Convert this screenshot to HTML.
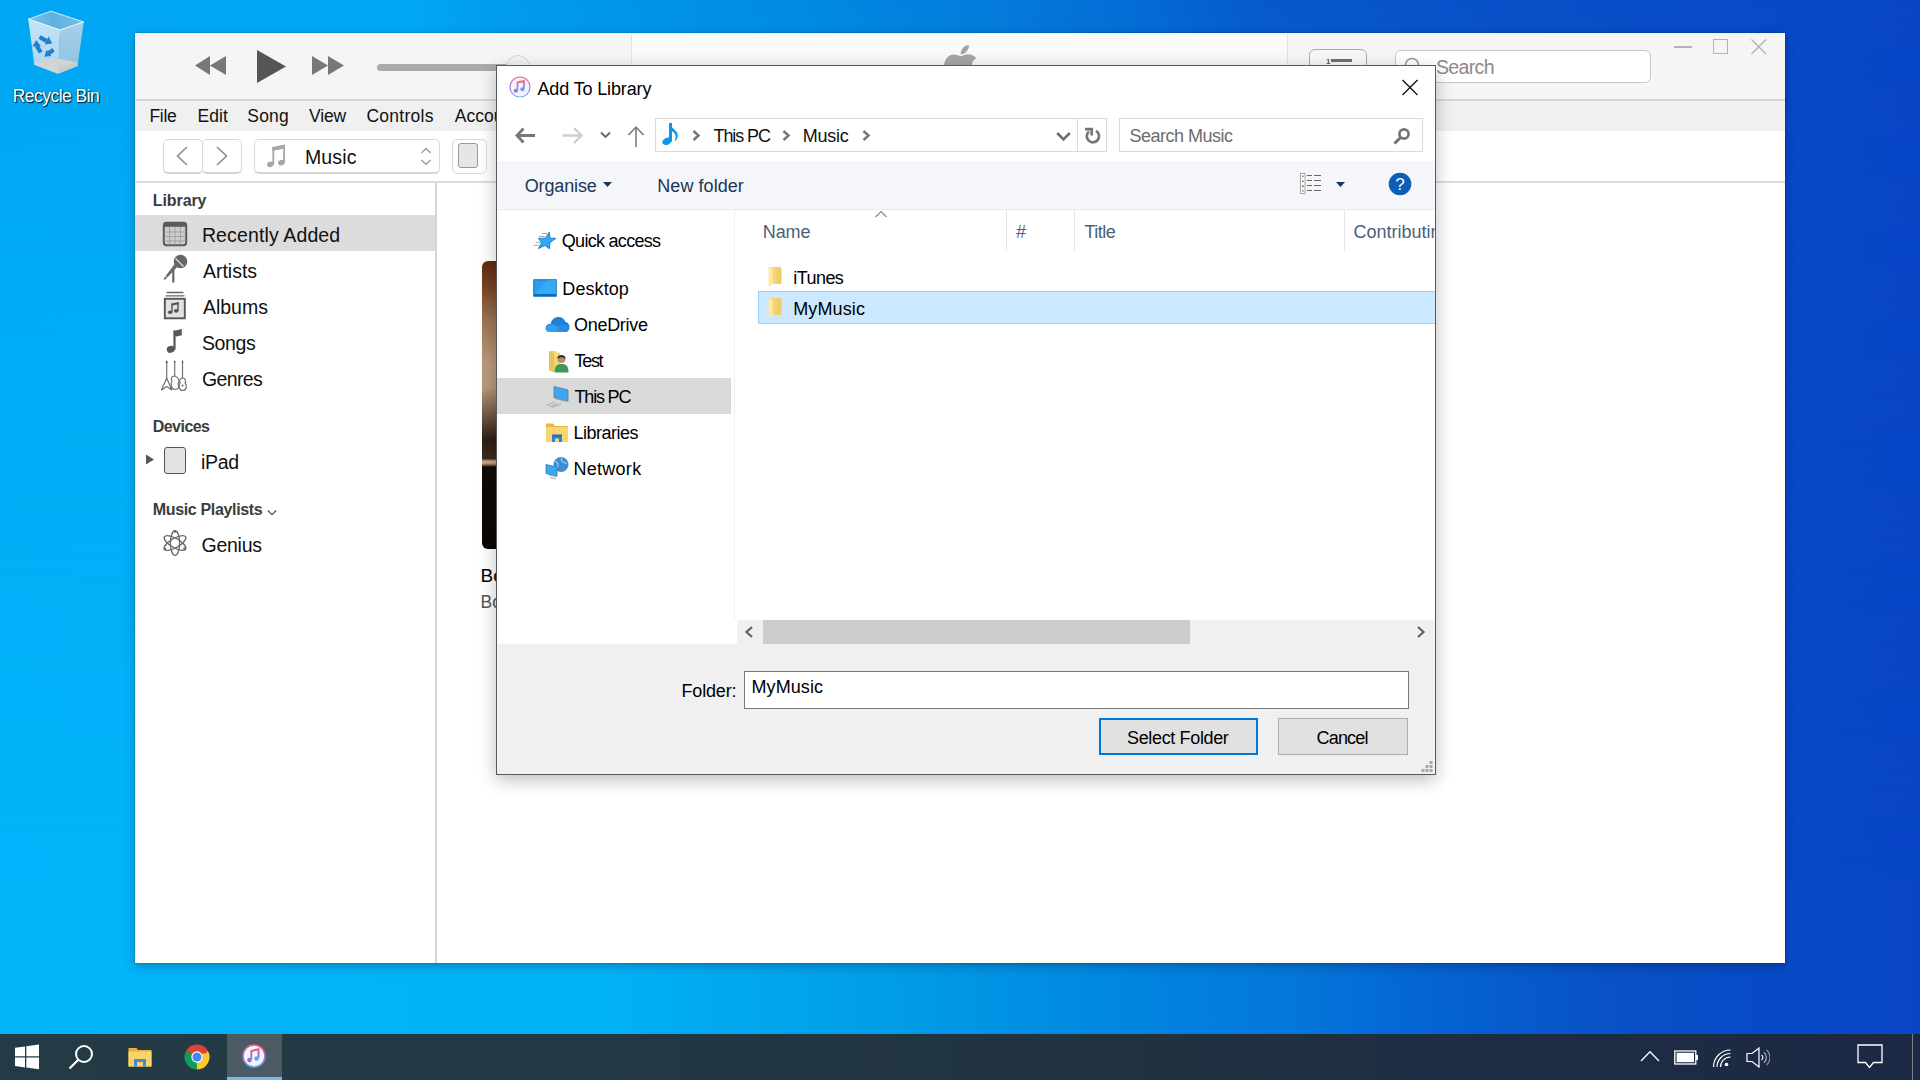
<!DOCTYPE html><html><head><meta charset='utf-8'><style>
*{margin:0;padding:0;box-sizing:border-box}
html,body{width:1920px;height:1080px;overflow:hidden}
body{position:relative;font-family:"Liberation Sans",sans-serif;
 background:linear-gradient(90deg,#02b4fa 0px,#02b2f8 600px,#00aaf2 700px,#009ce8 900px,#0088e0 1100px,#0476da 1300px,#0468d4 1400px,#065cce 1500px,#0852c8 1600px,#084cc6 1700px,#0846c6 1920px);}
#bgtop{position:absolute;left:0;top:0;width:1920px;height:1034px;
 background:linear-gradient(90deg,#00a6f2 0px,#00a8f4 400px,#009cec 500px,#008ae2 800px,#047ada 1000px,#046cd6 1130px,#065acd 1250px,#0850c8 1500px,#0846c6 1920px);
 -webkit-mask-image:linear-gradient(180deg,#000 0%,rgba(0,0,0,0.5) 35%,transparent 85%);mask-image:linear-gradient(180deg,#000 0%,rgba(0,0,0,0.5) 35%,transparent 85%);}
.a{position:absolute}
.t{position:absolute;white-space:nowrap}
</style></head><body>
<div id="bgtop"></div>
<svg class="a" style="left:15px;top:5px;" width="80" height="75" viewBox="0 0 80 75">
<defs>
 <linearGradient id="rbl" x1="0" y1="0" x2="0" y2="1"><stop offset="0" stop-color="#c4e3f4"/><stop offset="1" stop-color="#a9d6ee"/></linearGradient>
 <linearGradient id="rbr" x1="0" y1="0" x2="0" y2="1"><stop offset="0" stop-color="#a6d0e8"/><stop offset="1" stop-color="#8fc2df"/></linearGradient>
 <linearGradient id="rbi" x1="0" y1="0" x2="1" y2="0"><stop offset="0" stop-color="#7cc3ea"/><stop offset="0.45" stop-color="#5fb0df"/><stop offset="1" stop-color="#74c0ea"/></linearGradient>
</defs>
<path d="M13.2 14.2 L36.1 6.25 L68.75 17 L45.1 25 Z" fill="url(#rbi)" stroke="#dff3fc" stroke-width="0.9"/>
<path d="M13.2 14.2 L45.1 25 L43 68.75 L19.4 59.7 Z" fill="url(#rbl)"/>
<path d="M45.1 25 L68.75 17 L62.5 61.1 L43 68.75 Z" fill="url(#rbr)"/>
<path d="M19.4 58.3 L38.9 52.8 L62.5 57.6 L62.5 61.1 L43 68.75 L19.4 59.7 Z" fill="#d4d4d4" opacity="0.95"/>
<path d="M43 68.75 L62.5 61.1 L62.5 57.6 L43.5 62 Z" fill="#c6c6c6" opacity="0.7"/>
<path d="M13.2 14.2 L45.1 25 L68.75 17" fill="none" stroke="#e8f7fd" stroke-width="0.9"/>
<g stroke="#1f7dd4" stroke-width="4.2" stroke-linecap="butt" fill="none">
 <path d="M24.5 32 L31.5 35.8"/>
 <path d="M25.8 47.5 L21.8 41"/>
 <path d="M38.5 44.8 L33.5 48.3"/>
</g>
<g fill="#1f7dd4">
 <path d="M33.6 31.6 L37.2 38.6 L29.6 39.4 Z"/>
 <path d="M17.4 41.5 L21.2 35.2 L26 41.2 Z"/>
 <path d="M36.3 51 L29.3 51.8 L31.5 44.9 Z"/>
</g>
</svg>
<div class="t " style="left:12.75px;top:88.49px;font-size:17.5px;line-height:17.5px;color:#fff;letter-spacing:-0.53px;text-shadow:1px 1px 1px rgba(0,0,0,0.85),0 0 2px rgba(0,0,0,0.45);">Recycle Bin</div>
<div class="a" style="left:135px;top:33px;width:1650px;height:930px;background:#fff;box-shadow:0 0 1.5px rgba(0,0,0,0.35),0 3px 10px rgba(0,0,0,0.25);"></div>
<div class="a" style="left:135px;top:33px;width:1650px;height:67px;background:#f5f5f5;"></div>
<div class="a" style="left:135px;top:99px;width:1650px;height:2px;background:#d6d6d6;"></div>
<div class="a" style="left:631px;top:33px;width:657px;height:66px;background:linear-gradient(180deg,#fbfbfb 0%,#f8f8f8 60%,#ececec 100%);border-left:1px solid #e2e2e2;border-right:1px solid #e2e2e2;"></div>
<svg class="a" style="left:930px;top:40px;" width="60" height="30" viewBox="0 0 60 30"><g transform="translate(10 4) scale(0.243)" fill="#a5a5a5"><path d="M150.37 130.25c-2.45 5.66-5.35 10.87-8.71 15.66-4.58 6.53-8.33 11.05-11.22 13.56-4.48 4.12-9.28 6.23-14.42 6.35-3.69 0-8.14-1.05-13.32-3.18-5.197-2.12-9.973-3.17-14.34-3.17-4.58 0-9.492 1.05-14.746 3.17-5.262 2.130-9.501 3.240-12.742 3.350-4.929 0.210-9.842-1.960-14.746-6.520-3.130-2.730-7.045-7.410-11.735-14.040-5.032-7.080-9.169-15.290-12.410-24.650-3.471-10.110-5.211-19.900-5.211-29.378 0-10.857 2.346-20.221 7.045-28.068 3.693-6.303 8.606-11.275 14.755-14.925s12.793-5.510 19.948-5.629c3.915 0 9.049 1.211 15.429 3.591 6.362 2.388 10.447 3.599 12.238 3.599 1.339 0 5.877-1.416 13.570-4.239 7.275-2.618 13.415-3.702 18.445-3.275 13.630 1.100 23.870 6.473 30.680 16.153-12.190 7.386-18.220 17.731-18.100 31.002 0.110 10.337 3.860 18.939 11.230 25.769 3.340 3.170 7.070 5.620 11.220 7.360-0.900 2.610-1.850 5.110-2.860 7.510z"/><path d="M119.11 7.24c0 8.102-2.960 15.667-8.860 22.669-7.120 8.324-15.732 13.134-25.071 12.375-0.119-0.972-0.188-1.995-0.188-3.070 0-7.778 3.386-16.102 9.399-22.908 3.002-3.446 6.820-6.311 11.450-8.597 4.620-2.252 8.990-3.497 13.100-3.710 0.120 1.083 0.170 2.166 0.170 3.240z"/></g></svg>
<svg class="a" style="left:193px;top:55px;" width="36" height="23" viewBox="0 0 36 23"><path d="M2 10.5 L17 1 L17 20 Z M17 10.5 L33 1 L33 20 Z" fill="#777"/></svg>
<svg class="a" style="left:255px;top:49px;" width="34" height="36" viewBox="0 0 34 36"><path d="M2 1 L31 17.5 L2 34 Z" fill="#555"/></svg>
<svg class="a" style="left:310px;top:55px;" width="36" height="23" viewBox="0 0 36 23"><path d="M2 1 L18 10.5 L2 20 Z M18 1 L34 10.5 L18 20 Z" fill="#777"/></svg>
<div class="a" style="left:377px;top:64px;width:140px;height:7px;background:#aaa;border-radius:4px;"></div>
<div class="a" style="left:506px;top:55px;width:24px;height:24px;background:#f2f2f2;border:1px solid #d5d5d5;border-radius:50%;"></div>
<div class="a" style="left:1309px;top:49px;width:58px;height:34px;border:1.5px solid #a9a9a9;border-radius:6px;background:#f7f7f7;"></div>
<div class="a" style="left:1331px;top:59px;width:21px;height:3px;background:#707070;"></div>
<div class="t " style="left:1326.00px;top:57.53px;font-size:8px;line-height:8px;color:#555;font-weight:700;">1</div>
<div class="a" style="left:1395px;top:50px;width:256px;height:33px;border:1.5px solid #c6c6c6;border-radius:6px;background:#fff;"></div>
<svg class="a" style="left:1402px;top:55px;" width="22" height="22" viewBox="0 0 22 22"><circle cx="10" cy="10" r="6.5" fill="none" stroke="#9a9a9a" stroke-width="1.6"/><path d="M14.5 14.5 L20 20" stroke="#9a9a9a" stroke-width="1.8"/></svg>
<div class="t " style="left:1435.90px;top:58.04px;font-size:19.5px;line-height:19.5px;color:#8a8a8a;letter-spacing:-0.63px;">Search</div>
<div class="a" style="left:1674px;top:46px;width:18px;height:1.5px;background:#b3b3b3;"></div>
<div class="a" style="left:1713px;top:39px;width:15px;height:15px;border:1.3px solid #b3b3b3;"></div>
<svg class="a" style="left:1750px;top:38px;" width="18" height="18" viewBox="0 0 18 18"><path d="M1.5 1.5 L16 16 M16 1.5 L1.5 16" stroke="#b3b3b3" stroke-width="1.4"/></svg>
<div class="a" style="left:135px;top:101px;width:1650px;height:30px;background:#f0f0f0;"></div>
<div class="t " style="left:149.50px;top:107.99px;font-size:17.5px;line-height:17.5px;color:#111;letter-spacing:-0.33px;">File</div>
<div class="t " style="left:197.40px;top:107.99px;font-size:17.5px;line-height:17.5px;color:#111;letter-spacing:0.07px;">Edit</div>
<div class="t " style="left:247.30px;top:107.99px;font-size:17.5px;line-height:17.5px;color:#111;letter-spacing:0.20px;">Song</div>
<div class="t " style="left:309.00px;top:107.99px;font-size:17.5px;line-height:17.5px;color:#111;letter-spacing:-0.13px;">View</div>
<div class="t " style="left:366.40px;top:107.99px;font-size:17.5px;line-height:17.5px;color:#111;letter-spacing:0.27px;">Controls</div>
<div class="t " style="left:454.80px;top:107.99px;font-size:17.5px;line-height:17.5px;color:#111;">Account</div>
<div class="a" style="left:135px;top:181px;width:1650px;height:1.5px;background:#dcdcdc;"></div>
<div class="a" style="left:163px;top:139px;width:40px;height:35px;border:1px solid #d9d9d9;border-bottom:2px solid #d2d2d2;border-radius:5px;background:#fff;"></div>
<div class="a" style="left:202px;top:139px;width:40px;height:35px;border:1px solid #d9d9d9;border-bottom:2px solid #d2d2d2;border-radius:5px;background:#fff;"></div>
<svg class="a" style="left:175px;top:146px;" width="14" height="20" viewBox="0 0 14 20"><path d="M11.5 1.5 L2.5 10 L11.5 18.5" fill="none" stroke="#8e8e8e" stroke-width="1.7" stroke-linecap="round"/></svg>
<svg class="a" style="left:215px;top:146px;" width="14" height="20" viewBox="0 0 14 20"><path d="M2.5 1.5 L11.5 10 L2.5 18.5" fill="none" stroke="#8e8e8e" stroke-width="1.7" stroke-linecap="round"/></svg>
<div class="a" style="left:254px;top:139px;width:186px;height:35px;border:1px solid #d9d9d9;border-bottom:2px solid #d2d2d2;border-radius:5px;background:#fff;"></div>
<svg class="a" style="left:265px;top:142px;" width="24" height="26" viewBox="0 0 24 26"><path d="M7.4 5 L20 2.6 L20 6.4 L7.4 8.8 Z" fill="#a6a6a6"/><rect x="7.4" y="5" width="1.8" height="17.5" fill="#a6a6a6"/><rect x="18.2" y="3" width="1.8" height="17.5" fill="#a6a6a6"/><ellipse cx="5.4" cy="22.4" rx="3.4" ry="2.7" transform="rotate(-20 5.4 22.4)" fill="#a6a6a6"/><ellipse cx="16.4" cy="20.6" rx="3.4" ry="2.7" transform="rotate(-20 16.4 20.6)" fill="#a6a6a6"/></svg>
<div class="t " style="left:305.00px;top:148.29px;font-size:19.5px;line-height:19.5px;color:#111;letter-spacing:0.12px;">Music</div>
<svg class="a" style="left:419px;top:146px;" width="14" height="22" viewBox="0 0 14 22"><path d="M2.5 7 L7 2.5 L11.5 7 M2.5 14 L7 18.5 L11.5 14" fill="none" stroke="#a0a0a0" stroke-width="1.5"/></svg>
<div class="a" style="left:452px;top:139px;width:35px;height:35px;border:1px solid #dadada;border-radius:5px;background:#fff;"></div>
<div class="a" style="left:458px;top:143px;width:20px;height:25px;border:1.3px solid #9a9a9a;border-radius:3px;background:#e6e6e6;"></div>
<div class="a" style="left:135px;top:33px;width:1650px;height:1px;background:#dcfbff;"></div>
<div class="a" style="left:135px;top:33px;width:1px;height:930px;background:#dcfbff;"></div>
<div class="a" style="left:435px;top:182px;width:2px;height:781px;background:#d6d6d6;"></div>
<div class="t " style="left:152.75px;top:192.76px;font-size:16px;line-height:16px;color:#3c3c3c;font-weight:700;letter-spacing:-0.08px;">Library</div>
<div class="a" style="left:135px;top:215px;width:300px;height:36px;background:#dcdcdc;"></div>
<div class="t " style="left:201.90px;top:226.29px;font-size:19.5px;line-height:19.5px;color:#111;letter-spacing:0.13px;">Recently Added</div>
<div class="t " style="left:202.90px;top:262.29px;font-size:19.5px;line-height:19.5px;color:#111;">Artists</div>
<div class="t " style="left:202.90px;top:298.04px;font-size:19.5px;line-height:19.5px;color:#111;">Albums</div>
<div class="t " style="left:201.90px;top:333.79px;font-size:19.5px;line-height:19.5px;color:#111;letter-spacing:-0.38px;">Songs</div>
<div class="t " style="left:201.90px;top:369.79px;font-size:19.5px;line-height:19.5px;color:#111;letter-spacing:-0.60px;">Genres</div>
<div class="t " style="left:152.75px;top:419.26px;font-size:16px;line-height:16px;color:#3c3c3c;font-weight:700;letter-spacing:-0.54px;">Devices</div>
<div class="t " style="left:201.00px;top:453.04px;font-size:19.5px;line-height:19.5px;color:#111;letter-spacing:-0.33px;">iPad</div>
<div class="t " style="left:152.75px;top:502.26px;font-size:16px;line-height:16px;color:#3c3c3c;font-weight:700;letter-spacing:-0.34px;">Music Playlists</div>
<svg class="a" style="left:266px;top:508px;" width="12" height="9" viewBox="0 0 12 9"><path d="M1.8 2.5 L6 6.7 L10.2 2.5" fill="none" stroke="#555" stroke-width="1.3"/></svg>
<div class="t " style="left:201.50px;top:535.54px;font-size:19.5px;line-height:19.5px;color:#111;letter-spacing:-0.25px;">Genius</div>
<svg class="a" style="left:162px;top:221px;" width="26" height="26" viewBox="0 0 26 26"><rect x="1.8" y="1.8" width="22.4" height="22.4" rx="2.6" fill="#cdcdcd" stroke="#5a5a5a" stroke-width="2"/><rect x="1.8" y="1.8" width="22.4" height="4" fill="#5a5a5a"/><path d="M2.5 11H23.5 M2.5 15.5H23.5 M2.5 20H23.5 M7.6 6V23.5 M13 6V23.5 M18.4 6V23.5" stroke="#a2a2a2" stroke-width="1"/></svg>
<svg class="a" style="left:160px;top:253px;" width="30" height="32" viewBox="0 0 30 32"><path d="M16.5 8.5 L4.5 24.5 L3.5 27 L6 26 L19.5 11.5 Z" fill="#6a6a6a"/><path d="M5 22.5 L7.5 25" stroke="#fff" stroke-width="0.8"/><circle cx="20.5" cy="8.5" r="6.8" fill="#666"/><path d="M15.5 5.5 L23.5 13.5" stroke="#e8e8e8" stroke-width="1.1"/><rect x="12.2" y="17" width="2.2" height="12.5" fill="#666"/></svg>
<svg class="a" style="left:162px;top:290px;" width="26" height="30" viewBox="0 0 26 30"><path d="M4.5 2.5H21.5 M3.5 5.8H22.5" stroke="#666" stroke-width="1.3"/><rect x="2.8" y="8.8" width="20" height="19.5" fill="#e2e2e2" stroke="#555" stroke-width="1.9"/><path d="M9.5 13.5 L16.5 12 L16.5 14.2 L9.5 15.7 Z" fill="#555"/><rect x="9.3" y="13.5" width="1.4" height="8.5" fill="#555"/><rect x="15.3" y="12.2" width="1.4" height="8.5" fill="#555"/><ellipse cx="8.2" cy="22.2" rx="2.3" ry="1.8" fill="#555"/><ellipse cx="14.2" cy="20.9" rx="2.3" ry="1.8" fill="#555"/></svg>
<svg class="a" style="left:164px;top:327px;" width="22" height="28" viewBox="0 0 22 28"><path d="M9.5 4 L17.8 2 L17.8 8.2 L11.5 9.8 Z" fill="#585858"/><rect x="9.4" y="3.5" width="2.2" height="19" fill="#585858"/><ellipse cx="6.8" cy="22.3" rx="4.1" ry="3.4" transform="rotate(-20 6.8 22.3)" fill="#585858"/></svg>
<svg class="a" style="left:158px;top:358px;" width="32" height="35" viewBox="0 0 32 35"><g fill="none" stroke="#6e6e6e" stroke-width="1.15" stroke-linejoin="round"><path d="M8.7 3 V20"/><path d="M8.7 20 L3.5 32 L8.7 28.5 L13.8 32 Z"/><path d="M16.7 3 V18"/><path d="M16.7 18 C13.5 18 12.5 20.5 14 23 C12 25.5 13 31.5 17 31.5 C20.5 31.5 21.5 28.5 20 26 C22 24 21 19 16.7 18 Z"/><path d="M24.5 3 V20"/><path d="M24.5 20 C21.5 20 21 23.5 22.3 25 C20.5 26.5 20.5 32.5 24.7 32.5 C29 32.5 29 26.5 27 25 C28.3 23.5 27.5 20 24.5 20 Z"/></g><circle cx="24.6" cy="27.5" r="1.1" fill="#6e6e6e"/><path d="M7.3 5 L8.7 2 L10.1 5 Z M15.5 4.5 L16.7 2 L17.9 4.5 Z M23.3 4.5 L24.5 2 L25.7 4.5 Z" fill="#6e6e6e"/></svg>
<svg class="a" style="left:145px;top:454px;" width="10" height="11" viewBox="0 0 10 11"><path d="M1 0.5 L9 5.5 L1 10.5 Z" fill="#555"/></svg>
<div class="a" style="left:164px;top:447px;width:22px;height:27px;border:1.6px solid #555;border-radius:3px;background:#e3e3e3;"></div>
<svg class="a" style="left:161px;top:529px;" width="28" height="28" viewBox="0 0 28 28"><g fill="none" stroke="#6a6a6a" stroke-width="1.35"><ellipse cx="14" cy="14" rx="4.6" ry="12.3"/><ellipse cx="14" cy="14" rx="4.6" ry="12.3" transform="rotate(60 14 14)"/><ellipse cx="14" cy="14" rx="4.6" ry="12.3" transform="rotate(-60 14 14)"/></g><circle cx="14" cy="2.5" r="1.3" fill="#6a6a6a"/><circle cx="4" cy="20" r="1.3" fill="#6a6a6a"/><circle cx="23.5" cy="19.5" r="1.3" fill="#6a6a6a"/></svg>
<div class="a" style="left:482px;top:261px;width:40px;height:288px;border-radius:6px;background:linear-gradient(180deg,#5e2a10 0%,#7a4424 9%,#9a7252 20%,#bb9c7c 36%,#b89878 44%,#6e5444 54%,#2e1e16 62%,#3a2a20 68.6%,#d2a888 69.6%,#c09070 70.4%,#120a08 71.5%,#0c0605 100%);"></div>
<div class="t " style="left:480.50px;top:566.22px;font-size:19px;line-height:19px;color:#000;">Bo</div>
<div class="t " style="left:480.50px;top:594.49px;font-size:17.5px;line-height:17.5px;color:#555;">Bo</div>
<div class="a" style="left:496px;top:65px;width:940px;height:710px;background:#fff;border:1px solid #5a5a5a;box-shadow:0 5px 16px rgba(0,0,0,0.26);"></div>
<svg class="a" style="left:509px;top:76px;" width="22" height="22" viewBox="0 0 22 22"><defs><linearGradient id="itg" x1="0" y1="0" x2="0" y2="1"><stop offset="0" stop-color="#f06a8a"/><stop offset="0.5" stop-color="#b27ae0"/><stop offset="1" stop-color="#6cb4f0"/></linearGradient></defs>
<circle cx="11" cy="11" r="10" fill="#f4f4f8" stroke="url(#itg)" stroke-width="1.2"/>
<path d="M8.5 14.5 V6.5 L15 5 V13" fill="none" stroke="url(#itg)" stroke-width="1.8"/>
<circle cx="6.8" cy="14.8" r="2" fill="#a070e0"/><circle cx="13.3" cy="13.3" r="2" fill="#60a8f0"/></svg>
<div class="t " style="left:537.50px;top:79.56px;font-size:18px;line-height:18px;color:#000;letter-spacing:-0.14px;">Add To Library</div>
<svg class="a" style="left:1401px;top:79px;" width="18" height="17" viewBox="0 0 18 17"><path d="M1.5 1 L16.5 16 M16.5 1 L1.5 16" stroke="#111" stroke-width="1.3"/></svg>
<svg class="a" style="left:514px;top:126px;" width="24" height="19" viewBox="0 0 24 19"><path d="M9.5 2.5 L3 9.5 L9.5 16.5 M3 9.5 H21" fill="none" stroke="#777" stroke-width="2.8"/></svg>
<svg class="a" style="left:560px;top:126px;" width="24" height="19" viewBox="0 0 24 19"><path d="M14 2 L21.5 9.5 L14 17 M21.5 9.5 H2.5" fill="none" stroke="#cfcfcf" stroke-width="2.4"/></svg>
<svg class="a" style="left:599px;top:130px;" width="13" height="10" viewBox="0 0 13 10"><path d="M2 2.5 L6.5 7 L11 2.5" fill="none" stroke="#666" stroke-width="1.8"/></svg>
<svg class="a" style="left:626px;top:125px;" width="20" height="23" viewBox="0 0 20 23"><path d="M2.5 10 L10 2 L17.5 10 M10 2 V22" fill="none" stroke="#777" stroke-width="1.5"/></svg>
<div class="a" style="left:655px;top:118px;width:452px;height:34px;border:1px solid #d9d9d9;background:#fff;"></div>
<div class="a" style="left:1077px;top:118px;width:1px;height:34px;background:#dadada;"></div>
<svg class="a" style="left:656px;top:119px;" width="26" height="30" viewBox="0 0 26 30"><rect x="13" y="4" width="3" height="18.5" fill="#0b98ea"/><ellipse cx="11" cy="22.3" rx="4.9" ry="3.5" transform="rotate(-25 11 22.3)" fill="#0b98ea"/><path d="M13.5 4.2 C15 9.5 21.8 11 21.8 16.5 C21.8 18.5 20.6 20.6 19.6 21.8 L18.6 21.3 C19.6 19.6 19.9 17.8 19.5 16.2 C18.8 13.6 16.2 12.3 15.2 11.8 Z" fill="#0b98ea"/></svg>
<svg class="a" style="left:691px;top:129px;" width="11" height="13" viewBox="0 0 11 13"><path d="M2.5 2 L7.5 6.5 L2.5 11" fill="none" stroke="#777" stroke-width="2.5"/></svg>
<div class="t " style="left:713.50px;top:126.81px;font-size:18px;line-height:18px;color:#111;letter-spacing:-1.08px;">This PC</div>
<svg class="a" style="left:781px;top:129px;" width="11" height="13" viewBox="0 0 11 13"><path d="M2.5 2 L7.5 6.5 L2.5 11" fill="none" stroke="#777" stroke-width="2.5"/></svg>
<div class="t " style="left:802.75px;top:126.81px;font-size:18px;line-height:18px;color:#111;letter-spacing:-0.25px;">Music</div>
<svg class="a" style="left:861px;top:129px;" width="11" height="13" viewBox="0 0 11 13"><path d="M2.5 2 L7.5 6.5 L2.5 11" fill="none" stroke="#777" stroke-width="2.5"/></svg>
<svg class="a" style="left:1055px;top:130px;" width="17" height="13" viewBox="0 0 17 13"><path d="M2.2 3 L8.5 9.3 L14.8 3" fill="none" stroke="#707070" stroke-width="2.6"/></svg>
<svg class="a" style="left:1083px;top:126px;" width="20" height="20" viewBox="0 0 20 20"><path d="M12.95 4.92 A6.1 6.1 0 1 1 5.98 5.53" fill="none" stroke="#757575" stroke-width="2.7"/><path d="M2 1.8 H10 V9.5 H7.4 V4.4 H2 Z" fill="#757575"/></svg>
<div class="a" style="left:1119px;top:118px;width:304px;height:34px;border:1px solid #d9d9d9;background:#fff;"></div>
<div class="t " style="left:1129.50px;top:127.06px;font-size:18px;line-height:18px;color:#6d6d6d;letter-spacing:-0.50px;">Search Music</div>
<svg class="a" style="left:1391px;top:126px;" width="21" height="20" viewBox="0 0 21 20"><circle cx="13" cy="8" r="4.6" fill="none" stroke="#737373" stroke-width="2.7"/><path d="M9.5 11.5 L3.5 17.5" stroke="#737373" stroke-width="3"/></svg>
<div class="a" style="left:497px;top:161px;width:938px;height:49px;background:#f4f6f9;border-bottom:1px solid #e6e8eb;"></div>
<div class="t " style="left:524.75px;top:177.46px;font-size:18px;line-height:18px;color:#1e3557;letter-spacing:-0.14px;">Organise</div>
<svg class="a" style="left:602px;top:181px;" width="11" height="7" viewBox="0 0 11 7"><path d="M1 1 L10 1 L5.5 6 Z" fill="#1e3557"/></svg>
<div class="t " style="left:657.25px;top:177.46px;font-size:18px;line-height:18px;color:#1e3557;letter-spacing:0.06px;">New folder</div>
<svg class="a" style="left:1299px;top:172px;" width="24" height="23" viewBox="0 0 24 23"><rect x="1.5" y="1.5" width="4.5" height="20" fill="#fff" stroke="#9a9a9a" stroke-width="0.9"/><g fill="#6a7a8a"><rect x="3" y="3.5" width="1.6" height="1.6"/><rect x="3" y="8.5" width="1.6" height="1.6" fill="#7a7a50"/><rect x="3" y="13.5" width="1.6" height="1.6" fill="#a03030"/><rect x="3" y="18" width="1.6" height="1.6" fill="#60a060"/></g><g stroke="#666" stroke-width="1.2"><path d="M8 3.5H13 M15 3.5H22 M8 8.5H13 M15 8.5H22 M8 13.5H13 M15 13.5H22 M8 18.5H13 M15 18.5H22"/></g></svg>
<svg class="a" style="left:1335px;top:181px;" width="11" height="7" viewBox="0 0 11 7"><path d="M1 1 L10 1 L5.5 6 Z" fill="#1e3557"/></svg>
<svg class="a" style="left:1388px;top:172px;" width="24" height="24" viewBox="0 0 24 24"><circle cx="12" cy="12" r="11.3" fill="#0b5db5"/><text x="12" y="18" font-family="Liberation Sans" font-size="17" fill="#fff" text-anchor="middle">?</text></svg>
<div class="a" style="left:734px;top:210px;width:1px;height:410px;background:#f0f0f0;"></div>
<div class="a" style="left:497px;top:378px;width:234px;height:36px;background:#d9d9d9;"></div>
<div class="t " style="left:561.80px;top:232.26px;font-size:18px;line-height:18px;color:#000;letter-spacing:-0.71px;">Quick access</div>
<div class="t " style="left:562.30px;top:280.26px;font-size:18px;line-height:18px;color:#000;letter-spacing:0.08px;">Desktop</div>
<div class="t " style="left:574.00px;top:316.16px;font-size:18px;line-height:18px;color:#000;letter-spacing:-0.29px;">OneDrive</div>
<div class="t " style="left:574.50px;top:352.26px;font-size:18px;line-height:18px;color:#000;letter-spacing:-1.30px;">Test</div>
<div class="t " style="left:574.50px;top:388.36px;font-size:18px;line-height:18px;color:#000;letter-spacing:-1.18px;">This PC</div>
<div class="t " style="left:573.50px;top:424.46px;font-size:18px;line-height:18px;color:#000;letter-spacing:-0.51px;">Libraries</div>
<div class="t " style="left:573.50px;top:460.26px;font-size:18px;line-height:18px;color:#000;letter-spacing:0.27px;">Network</div>
<svg class="a" style="left:530px;top:226px;" width="30" height="28" viewBox="0 0 30 28"><path d="M11.9 7.5H16.9 M8.8 10.5H14.8 M5.7 16.3H11.1 M3.4 19.3H8.8" stroke="#8aa2b4" stroke-width="0.9"/><path d="M19.2 6.2 L20 12.2 L25.9 12.4 L20 16.6 L19.4 22.8 L15 19.4 L8.3 22.6 L11.7 16.6 L8.3 12.4 L15.3 12.2 Z" fill="#2ea9f3" stroke="#1b77c2" stroke-width="0.9" stroke-linejoin="round"/></svg>
<svg class="a" style="left:533px;top:279px;" width="24" height="18" viewBox="0 0 24 18"><rect x="0.8" y="0.8" width="22.4" height="16.4" fill="#2aa0f2" stroke="#1579c8" stroke-width="1.2"/><path d="M1 16 L15 1 H23 V17 H1 Z" fill="#45b0f7" opacity="0.6"/><rect x="1" y="15" width="22" height="2" fill="#1268b8"/></svg>
<svg class="a" style="left:544px;top:315px;" width="26" height="18" viewBox="0 0 26 18"><path d="M6 17 C1.5 17 0.5 13 2.5 10.5 C3.5 9 5.5 8.8 6.5 9 C7.5 4.5 11 2 14.5 2 C18 2 20.5 4 21.5 7 C24 7.2 25.5 9.5 25.5 12 C25.5 15 23.5 17 21 17 Z" fill="#1f7fd6"/><path d="M6 17 C2 17 1 13.5 3 11 C6 8.5 10 9.5 13 11.5 L21 17 Z" fill="#3a9ff0"/><path d="M13 11.5 C16 9.5 22 8 25 11.5 C25.5 15 23.5 17 21 17 L13 17 Z" fill="#2a8fe8" opacity="0.8"/></svg>
<svg class="a" style="left:548px;top:349px;" width="22" height="25" viewBox="0 0 22 25"><path d="M1 2 H8 L9 3.5 H12 V21 L4 23 L1 21 Z" fill="#f5d77a"/><path d="M1 2 L6 4 L6 23 L1 21 Z" fill="#e8c25a"/><circle cx="13.5" cy="10" r="4" fill="#c08a68"/><path d="M9.5 8.5 C10 5 16 5 17.5 8.5 L17 10 C15 7.5 12 7.5 10 10 Z" fill="#333"/><path d="M6.5 23.5 C6.5 17 8.5 15 13.5 15 C18.5 15 20.5 17 20.5 23.5 Z" fill="#3c9a5f"/></svg>
<svg class="a" style="left:545px;top:385px;" width="25" height="23" viewBox="0 0 25 23"><path d="M9 1.5 L23 5 L23 16 L9 12.5 Z" fill="#3aa8f0" stroke="#5a7a90" stroke-width="0.8"/><path d="M10 12.8 L22 15.8 L22 17 L10 14 Z" fill="#7aa0b8"/><path d="M1 20.5 L10 17 M4 22 L13 18.5 M7 22.5 L16 19" stroke="#9aa8b4" stroke-width="0.9"/></svg>
<svg class="a" style="left:545px;top:422px;" width="24" height="21" viewBox="0 0 24 21"><path d="M1 1.5 H8 L10 4 H23 V20 H1 Z" fill="#e9b839"/><rect x="1" y="5" width="22" height="15" fill="#f8d56f"/><path d="M7 20 V13.5 H17 V20 H14 V16.5 H10 V20 Z" fill="#2a83d2"/><rect x="7" y="12.5" width="10" height="2" fill="#1e6fc0"/></svg>
<svg class="a" style="left:545px;top:456px;" width="25" height="24" viewBox="0 0 25 24"><circle cx="16" cy="8.5" r="7.5" fill="#3d8fcc"/><path d="M10 5 C13 6 14 9 12 12 M17 1.5 C15 5 19 8 22 7" stroke="#9fd0f2" stroke-width="1.1" fill="none"/><path d="M1 8.5 L12 11 L12 20 L1 17.5 Z" fill="#3ea8ee" stroke="#2a7ab8" stroke-width="0.8"/><path d="M4 19 L12 21 M5 21.5 L11 23" stroke="#8aa" stroke-width="0.9"/></svg>
<svg class="a" style="left:874px;top:210px;" width="14" height="8" viewBox="0 0 14 8"><path d="M1.5 7 L7 1.5 L12.5 7" fill="none" stroke="#888" stroke-width="1.1"/></svg>
<div class="a" style="left:1006px;top:210px;width:1px;height:41px;background:#e5e5e5;"></div>
<div class="a" style="left:1074px;top:210px;width:1px;height:41px;background:#e5e5e5;"></div>
<div class="a" style="left:1344px;top:210px;width:1px;height:41px;background:#e5e5e5;"></div>
<div class="t " style="left:762.80px;top:223.36px;font-size:18px;line-height:18px;color:#4c607a;letter-spacing:-0.10px;">Name</div>
<div class="t " style="left:1016.00px;top:223.36px;font-size:18px;line-height:18px;color:#4c607a;">#</div>
<div class="t " style="left:1084.50px;top:223.36px;font-size:18px;line-height:18px;color:#4c607a;letter-spacing:-0.50px;">Title</div>
<div class="a" style="left:1354px;top:210px;width:81px;height:40px;overflow:hidden"><div class="t " style="left:-0.50px;top:13.36px;font-size:18px;line-height:18px;color:#4c607a;">Contributing artists</div></div>
<div class="a" style="left:758px;top:291px;width:677px;height:33px;background:#cce8ff;border:1px solid #99d1ff;border-right:none;"></div>
<svg class="a" style="left:767px;top:266px;" width="16" height="21" viewBox="0 0 16 21"><defs><linearGradient id="fg" x1="0" y1="0" x2="1" y2="0"><stop offset="0" stop-color="#f8df86"/><stop offset="1" stop-color="#efc95c"/></linearGradient></defs><path d="M1.5 1 H12.5 Q14.5 1 14.5 3 V16.5 Q14.5 18 12.5 18 H5.5 Z" fill="url(#fg)"/><path d="M1.5 1 L5.5 2.3 L5.5 18.5 L2.5 20.5 L1.5 19 Z" fill="#fbeaa8"/></svg>
<div class="t " style="left:793.20px;top:269.31px;font-size:18px;line-height:18px;color:#000;letter-spacing:-0.54px;">iTunes</div>
<svg class="a" style="left:767px;top:297px;" width="16" height="21" viewBox="0 0 16 21"><defs><linearGradient id="fg" x1="0" y1="0" x2="1" y2="0"><stop offset="0" stop-color="#f8df86"/><stop offset="1" stop-color="#efc95c"/></linearGradient></defs><path d="M1.5 1 H12.5 Q14.5 1 14.5 3 V16.5 Q14.5 18 12.5 18 H5.5 Z" fill="url(#fg)"/><path d="M1.5 1 L5.5 2.3 L5.5 18.5 L2.5 20.5 L1.5 19 Z" fill="#fbeaa8"/></svg>
<div class="t " style="left:793.20px;top:299.96px;font-size:18px;line-height:18px;color:#000;letter-spacing:0.12px;">MyMusic</div>
<div class="a" style="left:737px;top:620px;width:698px;height:24px;background:#f0f0f0;"></div>
<div class="a" style="left:763px;top:620px;width:427px;height:24px;background:#cdcdcd;"></div>
<svg class="a" style="left:743px;top:625px;" width="12" height="14" viewBox="0 0 12 14"><path d="M9 2 L3.5 7 L9 12" fill="none" stroke="#606060" stroke-width="2.2"/></svg>
<svg class="a" style="left:1415px;top:625px;" width="12" height="14" viewBox="0 0 12 14"><path d="M3 2 L8.5 7 L3 12" fill="none" stroke="#606060" stroke-width="2.2"/></svg>
<div class="a" style="left:497px;top:644px;width:938px;height:130px;background:#f0f0f0;"></div>
<div class="t " style="left:681.50px;top:681.56px;font-size:18px;line-height:18px;color:#000;letter-spacing:-0.17px;">Folder:</div>
<div class="a" style="left:744px;top:671px;width:665px;height:38px;background:#fff;border:1px solid #7a7a7a;"></div>
<div class="t " style="left:751.50px;top:678.31px;font-size:18px;line-height:18px;color:#000;letter-spacing:0.08px;">MyMusic</div>
<div class="a" style="left:1099px;top:718px;width:159px;height:37px;background:#e1e1e1;border:2px solid #0078d7;"></div>
<div class="t " style="left:1127.00px;top:728.81px;font-size:18px;line-height:18px;color:#000;letter-spacing:-0.35px;">Select Folder</div>
<div class="a" style="left:1278px;top:718px;width:130px;height:37px;background:#e1e1e1;border:1px solid #adadad;"></div>
<div class="t " style="left:1316.50px;top:728.81px;font-size:18px;line-height:18px;color:#000;letter-spacing:-0.80px;">Cancel</div>
<svg class="a" style="left:1420px;top:759px;" width="14" height="14" viewBox="0 0 14 14"><g fill="#a8a8a8"><rect x="9.5" y="2" width="3" height="3"/><rect x="5.5" y="6" width="3" height="3"/><rect x="9.5" y="6" width="3" height="3"/><rect x="1.5" y="10" width="3" height="3"/><rect x="5.5" y="10" width="3" height="3"/><rect x="9.5" y="10" width="3" height="3"/></g></svg>
<div class="a" style="left:0px;top:1034px;width:1920px;height:46px;background:linear-gradient(90deg,#233b45 0px,#233a44 400px,#223642 850px,#21313f 1150px,#1e2c45 1500px,#1c2944 1920px);"></div>
<svg class="a" style="left:14px;top:1044px;" width="26" height="26" viewBox="0 0 26 26"><g fill="#fff"><path d="M1 3.8 L11 2.4 V12.2 H1 Z"/><path d="M12.3 2.2 L25 0.5 V12.2 H12.3 Z"/><path d="M1 13.5 H11 V23.4 L1 22 Z"/><path d="M12.3 13.5 H25 V25.3 L12.3 23.6 Z"/></g></svg>
<svg class="a" style="left:68px;top:1044px;" width="27" height="26" viewBox="0 0 27 26"><circle cx="16" cy="10" r="8" fill="none" stroke="#fff" stroke-width="2"/><path d="M10.3 15.7 L1.5 24.5" stroke="#fff" stroke-width="2.2"/></svg>
<svg class="a" style="left:128px;top:1047px;" width="24" height="20" viewBox="0 0 24 20"><path d="M0.5 1 H8.5 L10 3 H23.5 V19.5 H0.5 Z" fill="#e9b33a"/><rect x="0.5" y="4.5" width="23" height="15" fill="#f8d46b"/><path d="M6 19.5 V12 H18 V19.5 H15 V15 H9 V19.5 Z" fill="#3a8fd8"/></svg>
<svg class="a" style="left:184px;top:1044px;" width="26" height="26" viewBox="0 0 26 26"><path d="M13 13 L23.83 6.75 A12.5 12.5 0 0 0 2.17 6.75 Z" fill="#db4437"/><path d="M13 13 L2.17 6.75 A12.5 12.5 0 0 0 13 25.5 Z" fill="#0f9d58"/><path d="M13 13 L13 25.5 A12.5 12.5 0 0 0 23.83 6.75 Z" fill="#fcc934"/><path d="M13 8.2 L23.83 6.75 L22 9.5 Z" fill="#db4437"/><circle cx="13" cy="13" r="5.7" fill="#fff"/><circle cx="13" cy="13" r="4.5" fill="#4285f4"/></svg>
<div class="a" style="left:227px;top:1034px;width:55px;height:46px;background:#4c5a63;"></div>
<div class="a" style="left:227px;top:1077px;width:55px;height:3px;background:#7ab8e8;"></div>
<svg class="a" style="left:242px;top:1044px;" width="24" height="24" viewBox="0 0 24 24"><defs><linearGradient id="itg2" x1="0" y1="0" x2="0" y2="1"><stop offset="0" stop-color="#f05a7a"/><stop offset="0.55" stop-color="#a26ee0"/><stop offset="1" stop-color="#58b0f2"/></linearGradient></defs>
<circle cx="12" cy="12" r="11" fill="#f6f6fa" stroke="url(#itg2)" stroke-width="1.6"/>
<path d="M9.3 15.8 V7 L16.5 5.3 V14.2" fill="none" stroke="url(#itg2)" stroke-width="2"/>
<circle cx="7.4" cy="16.1" r="2.3" fill="#9a6be0"/><circle cx="14.6" cy="14.5" r="2.3" fill="#60a8f2"/></svg>
<svg class="a" style="left:1640px;top:1050px;" width="20" height="12" viewBox="0 0 20 12"><path d="M1 11 L10 1.8 L19 11" fill="none" stroke="#fff" stroke-width="1.3"/></svg>
<svg class="a" style="left:1674px;top:1050px;" width="25" height="15" viewBox="0 0 25 15"><rect x="0.8" y="1" width="21" height="13" fill="none" stroke="#fff" stroke-width="1.3"/><rect x="2.6" y="2.8" width="17.4" height="9.4" fill="#fff"/><rect x="22" y="5" width="2" height="5" fill="#fff"/></svg>
<svg class="a" style="left:1712px;top:1048px;" width="22" height="20" viewBox="0 0 22 20"><g fill="none" stroke="#fff" stroke-width="1.2"><path d="M1.5 19 A17 17 0 0 1 18.5 2"/><path d="M5 19 A13.5 13.5 0 0 1 18.5 5.5" opacity="1"/><path d="M8.5 19 A10 10 0 0 1 18.5 9"/></g><circle cx="14.5" cy="16.5" r="1.8" fill="#fff"/></svg>
<svg class="a" style="left:1746px;top:1047px;" width="24" height="21" viewBox="0 0 24 21"><path d="M1 6.5 H6 L13 1 V20 L6 14.5 H1 Z" fill="none" stroke="#fff" stroke-width="1.2"/><path d="M15.5 8 A3 3 0 0 1 15.5 13" fill="none" stroke="#fff" stroke-width="1.1"/><path d="M18 5.5 A6.5 6.5 0 0 1 18 15.5" fill="none" stroke="#bbb" stroke-width="1.1"/><path d="M20.5 3 A10 10 0 0 1 20.5 18" fill="none" stroke="#999" stroke-width="1.1"/></svg>
<svg class="a" style="left:1857px;top:1044px;" width="26" height="26" viewBox="0 0 26 26"><path d="M1 1 H25 V18.5 H16.5 L12.5 23.5 L8.5 18.5 H1 Z" fill="none" stroke="#fff" stroke-width="1.3"/></svg>
<div class="a" style="left:1912px;top:1034px;width:1px;height:46px;background:#7a7f88;"></div>
</body></html>
